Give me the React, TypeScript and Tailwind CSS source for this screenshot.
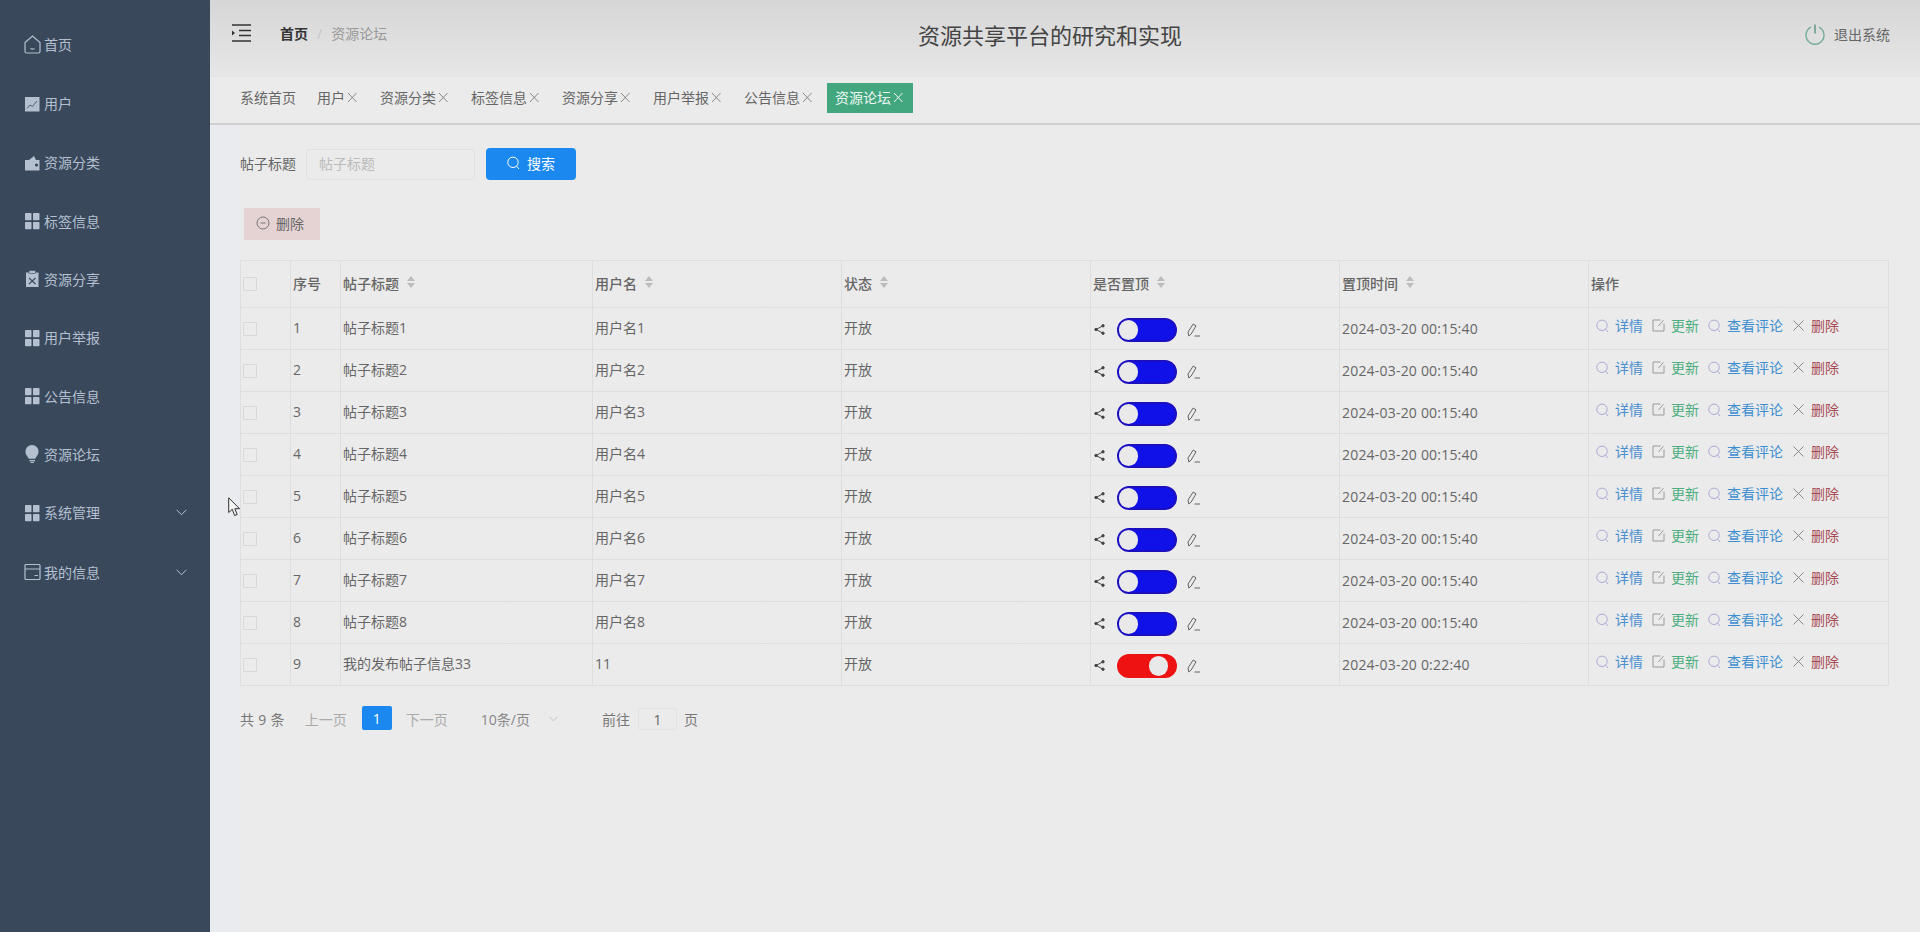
const rows = [
  { n: 1, t: "帖子标题1", u: "用户名1", d: "2024-03-20 00:15:40", on: true },
  { n: 2, t: "帖子标题2", u: "用户名2", d: "2024-03-20 00:15:40", on: true },
  { n: 3, t: "帖子标题3", u: "用户名3", d: "2024-03-20 00:15:40", on: true },
  { n: 4, t: "帖子标题4", u: "用户名4", d: "2024-03-20 00:15:40", on: true },
  { n: 5, t: "帖子标题5", u: "用户名5", d: "2024-03-20 00:15:40", on: true },
  { n: 6, t: "帖子标题6", u: "用户名6", d: "2024-03-20 00:15:40", on: true },
  { n: 7, t: "帖子标题7", u: "用户名7", d: "2024-03-20 00:15:40", on: true },
  { n: 8, t: "帖子标题8", u: "用户名8", d: "2024-03-20 00:15:40", on: true },
  { n: 9, t: "我的发布帖子信息33", u: "11", d: "2024-03-20 0:22:40", on: false },
];

function Grid() {
  return (
    <svg width="16" height="18" viewBox="0 0 16 18" fill="currentColor">
      <rect x="1" y="1" width="6.5" height="7.2" rx="0.8" />
      <rect x="9" y="1" width="6.5" height="7.2" rx="0.8" />
      <rect x="1" y="10" width="6.5" height="7.2" rx="0.8" />
      <rect x="9" y="10" width="6.5" height="7.2" rx="0.8" />
    </svg>
  );
}
function House() {
  return (
    <svg width="17" height="19" viewBox="0 0 17 19" fill="none" stroke="currentColor" strokeWidth="1.2">
      <path d="M1 7.5 8.5 1 16 7.5V16.5a1.5 1.5 0 0 1-1.5 1.5h-12A1.5 1.5 0 0 1 1 16.5Z" />
      <path d="M6.5 13.5c1 .7 3 .7 4 0" />
    </svg>
  );
}
function Chart() {
  return (
    <svg width="16" height="18" viewBox="0 0 16 18">
      <rect x="1" y="2" width="14.5" height="14.5" fill="currentColor" />
      <path d="M3 13.5l3-3.5 2.5 1.5L13 6" fill="none" stroke="#4e5f74" strokeWidth="1" />
    </svg>
  );
}
function Wallet() {
  return (
    <svg width="16" height="18" viewBox="0 0 16 18" fill="currentColor">
      <path d="M1 6h14.5v10.5H1Z" />
      <path d="M5 6l5-4 2 4Z" />
      <circle cx="12.5" cy="11" r="1.6" fill="#3a485c" />
    </svg>
  );
}
function Clip() {
  return (
    <svg width="16" height="18" viewBox="0 0 16 18">
      <path d="M2 2.5h12.5V17H2Z" fill="currentColor" />
      <rect x="5" y="0.5" width="6.5" height="3" fill="currentColor" stroke="#3a485c" strokeWidth="0.6" />
      <path d="M5 8l6.5 6M11.5 8 5 14" stroke="#3a485c" strokeWidth="1.1" />
    </svg>
  );
}
function Bulb() {
  return (
    <svg width="16" height="20" viewBox="0 0 16 20" fill="currentColor">
      <path d="M8 1a6.6 6.6 0 0 0-6.6 6.8c0 2.6 1.8 4 2.6 5.7.3.6.5 1.1 1 1.3h6c.5-.2.7-.7 1-1.3.8-1.7 2.6-3.1 2.6-5.7A6.6 6.6 0 0 0 8 1Z" />
      <rect x="5.5" y="16" width="5.5" height="1.3" />
      <rect x="6.5" y="18" width="3.5" height="1" />
    </svg>
  );
}
function Card() {
  return (
    <svg width="17" height="18" viewBox="0 0 17 18" fill="none" stroke="currentColor" strokeWidth="1.2">
      <rect x="1" y="1.5" width="15" height="15" rx="1" />
      <path d="M1 6h15M10.5 12.5H14" />
    </svg>
  );
}
function Chevron({ c = "" }: { c?: string }) {
  return (
    <svg className={c} width="11" height="7" viewBox="0 0 11 7" fill="none" stroke="currentColor" strokeWidth="1">
      <path d="M.7.8 5.5 5.8 10.3.8" />
    </svg>
  );
}
function Search({ c = "" }: { c?: string }) {
  return (
    <svg className={c} width="13" height="14" viewBox="0 0 13 14" fill="none" stroke="currentColor" strokeWidth="1">
      <circle cx="6" cy="6.3" r="5.2" />
      <path d="M9.7 10.2 12 13" />
    </svg>
  );
}
function EditBox({ c = "" }: { c?: string }) {
  return (
    <svg className={c} width="13" height="13" viewBox="0 0 13 13" fill="none" stroke="currentColor" strokeWidth="1">
      <path d="M8.5 1H1v11h11V4.5" />
      <path d="M11.5 1.2 6.5 7" />
    </svg>
  );
}
function X({ c = "" }: { c?: string }) {
  return (
    <svg className={c} width="11" height="11" viewBox="0 0 11 11" fill="none" stroke="currentColor" strokeWidth="1">
      <path d="M.5.5l10 10M10.5.5l-10 10" />
    </svg>
  );
}
function SmallX({ c = "" }: { c?: string }) {
  return (
    <svg className={c} width="14" height="11" viewBox="0 0 14 11" fill="none" stroke="currentColor" strokeWidth="1">
      <path d="M3 1l8.5 9M11.5 1 3 10" />
    </svg>
  );
}
function Share() {
  return (
    <svg width="11" height="11" viewBox="0 0 11 11" fill="#444" stroke="#444" strokeWidth="1">
      <circle cx="9" cy="1.8" r="1.2" />
      <circle cx="9" cy="9.2" r="1.2" />
      <circle cx="2" cy="5.5" r="1.2" />
      <path d="M9 1.8 2 5.5 9 9.2" fill="none" />
    </svg>
  );
}
function Pen() {
  return (
    <svg className="block" width="13" height="14" viewBox="0 0 13 14" fill="none" stroke="#555" strokeWidth="0.9">
      <path d="M1.8 13 1 9 6.2 1l2.8 1.8L4.2 11Z" />
      <path d="M7.5 13h5.5" />
    </svg>
  );
}
function Sort() {
  return (
    <span className="ml-[8px] mb-[2px] inline-flex flex-col gap-[2px]">
      <span className="h-0 w-0 border-x-[4.5px] border-b-[5px] border-x-transparent border-b-[#bcbcbc]" />
      <span className="h-0 w-0 border-x-[4.5px] border-t-[5px] border-x-transparent border-t-[#bcbcbc]" />
    </span>
  );
}

const menu = [
  { l: "首页", i: <House />, h: "h-[60px]" },
  { l: "用户", i: <Chart />, h: "h-[59px]" },
  { l: "资源分类", i: <Wallet />, h: "h-[59px]" },
  { l: "标签信息", i: <Grid />, h: "h-[58px]" },
  { l: "资源分享", i: <Clip />, h: "h-[58px]" },
  { l: "用户举报", i: <Grid />, h: "h-[59px]" },
  { l: "公告信息", i: <Grid />, h: "h-[58px]" },
  { l: "资源论坛", i: <Bulb />, h: "h-[58px]" },
  { l: "系统管理", i: <Grid />, h: "h-[59px]", more: true },
  { l: "我的信息", i: <Card />, h: "h-[60px]", more: true },
];
const tabs = ["用户", "资源分类", "标签信息", "资源分享", "用户举报", "公告信息"];

function Th({ children, sort = true }: { children: React.ReactNode; sort?: boolean }) {
  return (
    <th className="border border-[#dedede] px-[2px] pb-[2px] text-left font-medium">
      <div className="flex items-center">
        <span>{children}</span>
        {sort && <Sort />}
      </div>
    </th>
  );
}

export default function App() {
  return (
    <div className="relative flex h-[932px] w-[1920px] overflow-hidden bg-[#ebebeb] text-[14px] text-[#666] [font-family:'Open_Sans','Noto_Sans_CJK_SC',sans-serif]">
      <aside className="w-[210px] shrink-0 bg-[#3a485c] pt-[14px] text-[#b4c0d0]">
        {menu.map((m) => (
          <div key={m.l} className={`flex items-center pl-[24px] pr-[23px] ${m.h}`}>
            <span className="flex w-[20px] items-center">{m.i}</span>
            <span>{m.l}</span>
            {m.more && <Chevron c="ml-auto" />}
          </div>
        ))}
      </aside>
      <main className="flex min-w-0 flex-1 flex-col">
        <header className="flex h-[77px] items-center bg-gradient-to-b from-[#d6d6d6] to-[#e7e7e7]">
          <div className="mb-[11px] flex w-[708px] items-center pl-[22px]">
            <svg width="20" height="18" viewBox="0 0 20 18" fill="none" stroke="#333" strokeWidth="1.3">
              <path d="M0 1h19M7 6.5h12M7 11.5h12M0 17h19" />
              <path d="M0 6.5 3 9 0 11.5Z" fill="#333" stroke="none" />
            </svg>
            <span className="ml-[28px] font-semibold text-[#333]">首页</span>
            <span className="ml-[9px] text-[#c0c4cc]">/</span>
            <span className="ml-[9px] text-[#999]">资源论坛</span>
          </div>
          <div className="mb-[7px] text-[22px] leading-[30px] text-[#444]">资源共享平台的研究和实现</div>
          <div className="mb-[8px] ml-auto flex items-center pr-[30px]">
            <svg width="20" height="21" viewBox="0 0 20 21" fill="none" stroke="#6fa897" strokeWidth="1.3">
              <path d="M6 3.2a9 9 0 1 0 8 0" />
              <path d="M10 0.5v9" stroke="#4d8c78" />
            </svg>
            <span className="ml-[9px] text-[#666]">退出系统</span>
          </div>
        </header>
        <div className="flex h-[48px] shrink-0 gap-[5px] border-b-[2px] border-[#cfcfcf] bg-[#ebebeb] pl-[22px] pt-[6px] shadow-[0_1px_3px_rgba(0,0,0,0.08)]">
          <div className="flex h-[30px] items-center px-[8px] pb-[2px]">系统首页</div>
          {tabs.map((t) => (
            <div key={t} className="flex h-[30px] items-center px-[8px] pb-[2px]">
              {t}
              <SmallX c="text-[#888]" />
            </div>
          ))}
          <div className="flex h-[30px] items-center bg-[#42a77f] px-[8px] pb-[2px] text-[#eef7f3]">
            资源论坛
            <SmallX />
          </div>
        </div>
        <section className="flex-1 bg-gradient-to-r from-[#e9ebee] from-[30px] to-[#ebebeb] to-[30px] pl-[30px] pt-[23px]">
          <div className="flex items-center">
            <span className="pb-[2px]">帖子标题</span>
            <div className="ml-[10px] flex h-[31px] w-[169px] items-center rounded-[4px] border border-[#e0e0e0] pb-[2px] pl-[12px] text-[#bbb]">帖子标题</div>
            <div className="ml-[11px] flex h-[32px] w-[90px] items-center justify-center gap-[7px] rounded-[4px] bg-[#1a88ee] pb-[2px] text-white">
              <Search />
              <span>搜索</span>
            </div>
          </div>
          <div className="ml-[4px] mt-[28px] flex h-[32px] w-[76px] items-center gap-[6px] bg-[#e5d2d2] pb-[2px] pl-[12px] text-[#666]">
            <svg width="14" height="14" viewBox="0 0 14 14" fill="none" stroke="#777" strokeWidth="1">
              <circle cx="7" cy="7" r="6" />
              <path d="M4.5 7h5" />
            </svg>
            <span>删除</span>
          </div>
          <table className="mt-[20px] w-[1648px] table-fixed border-collapse">
            <colgroup>
              <col className="w-[50px]" />
              <col className="w-[50px]" />
              <col className="w-[252px]" />
              <col className="w-[249px]" />
              <col className="w-[249px]" />
              <col className="w-[249px]" />
              <col className="w-[249px]" />
              <col className="w-[300px]" />
            </colgroup>
            <thead>
              <tr className="h-[47px]">
                <th className="border border-[#dedede] px-[2px] text-left">
                  <div className="h-[14px] w-[14px] rounded-[1px] border border-[#d8d8d8]" />
                </th>
                <Th sort={false}>序号</Th>
                <Th>帖子标题</Th>
                <Th>用户名</Th>
                <Th>状态</Th>
                <Th>是否置顶</Th>
                <Th>置顶时间</Th>
                <Th sort={false}>操作</Th>
              </tr>
            </thead>
            <tbody>
              {rows.map((r) => (
                <tr key={r.n} className="h-[42px]">
                  <td className="border border-[#dedede] px-[2px]">
                    <div className="h-[14px] w-[14px] rounded-[1px] border border-[#d8d8d8]" />
                  </td>
                  <td className="border border-[#dedede] px-[2px] pb-[2px]">{r.n}</td>
                  <td className="border border-[#dedede] px-[2px] pb-[2px]">{r.t}</td>
                  <td className="border border-[#dedede] px-[2px] pb-[2px]">{r.u}</td>
                  <td className="border border-[#dedede] px-[2px] pb-[2px]">开放</td>
                  <td className="border border-[#dedede] pl-[3px]">
                    <div className="mt-[2px] flex items-center">
                      <Share />
                      <div className={`ml-[12px] flex h-[24px] w-[60px] items-center rounded-full ${r.on ? "justify-start border-2 border-[#1c0fc0] bg-[#1010e8]" : "justify-end bg-[#ee1212] pr-[9px]"}`}>
                        <div className="h-[20px] w-[19px] rounded-full bg-[#e9e9e9]" />
                      </div>
                      <span className="ml-[10px]">
                        <Pen />
                      </span>
                    </div>
                  </td>
                  <td className="border border-[#dedede] px-[2px] tracking-[0.2px]">{r.d}</td>
                  <td className="border border-[#dedede] pl-[7px]">
                    <div className="mb-[6px] flex items-center">
                      <Search c="text-[#a9a9d6]" />
                      <span className="ml-[6px] text-[#4a8fd0]">详情</span>
                      <EditBox c="ml-[9px] text-[#999]" />
                      <span className="ml-[6px] text-[#4cae80]">更新</span>
                      <Search c="ml-[9px] text-[#a9a9d6]" />
                      <span className="ml-[6px] text-[#3f8fd0]">查看评论</span>
                      <X c="ml-[10px] text-[#888]" />
                      <span className="ml-[7px] text-[#a84a55]">删除</span>
                    </div>
                  </td>
                </tr>
              ))}
            </tbody>
          </table>
          <div className="mt-[21px] flex h-[24px] items-center">
            <span className="tracking-[0.3px] text-[#777]">共 9 条</span>
            <span className="ml-[20px] text-[#aaa]">上一页</span>
            <div className="mb-[2px] ml-[15px] flex h-[24px] w-[30px] items-center justify-center rounded-[2px] bg-[#1a88ee] text-white">1</div>
            <span className="ml-[14px] text-[#aaa]">下一页</span>
            <span className="ml-[33px] text-[#888]">10条/页</span>
            <Chevron c="ml-[19px] h-[6px] w-[9px] text-[#bbb]" />
            <span className="ml-[44px] text-[#777]">前往</span>
            <div className="ml-[8px] flex h-[22px] w-[39px] items-center justify-center rounded-[3px] border border-[#e2e2e2]">1</div>
            <span className="ml-[7px] text-[#777]">页</span>
          </div>
        </section>
      </main>
      <svg className="absolute left-[228px] top-[497px]" width="12" height="20" viewBox="0 0 12 20" fill="#f4f4f4" stroke="#333" strokeWidth="1">
        <path d="M.7.8V15.5l3.6-3.2 2.3 6.2 2.6-1-2.4-5.8h4.7Z" />
      </svg>
    </div>
  );
}
